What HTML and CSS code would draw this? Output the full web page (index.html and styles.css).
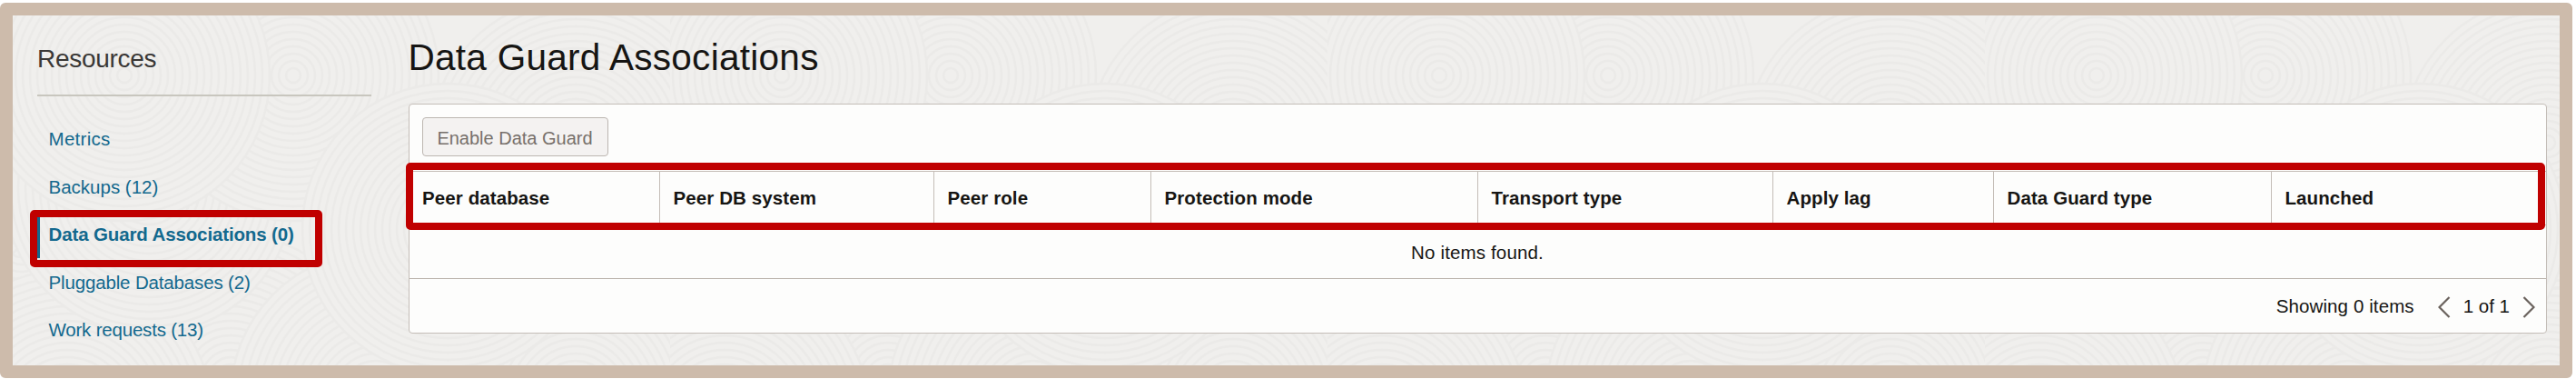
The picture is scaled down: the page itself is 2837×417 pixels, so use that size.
FILE: index.html
```html
<!DOCTYPE html>
<html lang="en">
<head>
<meta charset="utf-8">
<title>Data Guard Associations</title>
<link rel="stylesheet" href="styles.css">
</head>
<body>
<div class="frame">
  <svg class="texture" aria-hidden="true">
    <defs>
      <g id="rings" fill="none" stroke="#ebeae8" stroke-width="2.4">
        <circle r="160" fill="#f0efed"/><circle r="152"/><circle r="144"/><circle r="136"/><circle r="128"/><circle r="120"/><circle r="112"/><circle r="104"/><circle r="96"/><circle r="88"/><circle r="80"/><circle r="72"/><circle r="64"/><circle r="56"/><circle r="48"/><circle r="40"/><circle r="32"/><circle r="24"/><circle r="16"/><circle r="8"/>
      </g>
      <pattern id="grain" width="724" height="480" patternUnits="userSpaceOnUse">
        <rect width="724" height="480" fill="#f0efed"/>
        <use href="#rings" x="10" y="250"/><use href="#rings" x="734" y="250"/>
        <use href="#rings" x="240" y="400"/><use href="#rings" x="400" y="420"/>
        <use href="#rings" x="620" y="420"/><use href="#rings" x="60" y="440"/>
        <use href="#rings" x="620" y="140"/><use href="#rings" x="-104" y="140"/>
        <use href="#rings" x="150" y="190"/>
        <use href="#rings" x="309" y="66"/><use href="#rings" x="123" y="66"/>
        <use href="#rings" x="479" y="235"/>
      </pattern>
    </defs>
    <rect width="100%" height="100%" fill="url(#grain)"/>
  </svg>
  <aside class="sidebar">
    <h2 class="sidebar-title">Resources</h2>
    <nav class="links">
      <a class="link loose">Metrics</a>
      <a class="link">Backups (12)</a>
      <a class="link active">Data Guard Associations (0)</a>
      <a class="link snug">Pluggable Databases (2)</a>
      <a class="link tight">Work requests (13)</a>
    </nav>
  </aside>
  <main class="main">
    <h1 class="title">Data Guard Associations</h1>
    <section class="panel">
      <div class="toolbar"><button class="button" disabled>Enable Data Guard</button></div>
      <div class="head">
        <div class="cell">Peer database</div>
        <div class="cell">Peer DB system</div>
        <div class="cell">Peer role</div>
        <div class="cell">Protection mode</div>
        <div class="cell">Transport type</div>
        <div class="cell">Apply lag</div>
        <div class="cell">Data Guard type</div>
        <div class="cell">Launched</div>
      </div>
      <div class="empty">No items found.</div>
      <div class="footer">
        <span class="count">Showing 0 items</span>
        <svg class="chevron" viewBox="0 0 14 24"><path d="M12.5 1 1.5 12l11 11"/></svg>
        <span class="page">1 of 1</span>
        <svg class="chevron" viewBox="0 0 14 24"><path d="M1.5 1l11 11-11 11"/></svg>
      </div>
    </section>
  </main>
</div>
</body>
</html>
```
FILE: styles.css
```css
*, *::before, *::after { box-sizing: border-box; }
body {
  margin: 0;
  background: #fff;
  overflow: hidden;
  font-family: "Liberation Sans", Arial, sans-serif;
  font-size: 20.5px;
  color: #161513;
}
.frame {
  position: relative;
  display: flex;
  width: 2833px;
  height: 413px;
  margin-top: 3px;
  border: 14px solid #cdbbab;
  border-radius: 6px;
  background: #f0efed;
}
.texture { position: absolute; inset: 0; width: 100%; height: 100%; }
.sidebar {
  position: relative;
  width: 368px;
  margin-left: 27px;
}
.sidebar-title {
  margin: 0;
  height: 89px;
  padding-top: 32px;
  border-bottom: 2px solid #c8c6be;
  font-size: 28px;
  line-height: 32px;
  font-weight: 400;
  letter-spacing: -0.3px;
  color: #3a3836;
}
.links {
  display: flex;
  flex-direction: column;
  padding-top: 21px;
}
.link {
  position: relative;
  height: 52.5px;
  padding-left: 12.5px;
  line-height: 52px;
  color: #13698e;
  white-space: nowrap;
}
.loose { letter-spacing: 0.3px; }
.snug { letter-spacing: -0.15px; }
.tight { letter-spacing: -0.2px; }
.active { font-weight: 700; letter-spacing: -0.13px; }
.active::before {
  content: "";
  position: absolute;
  left: 0;
  top: 5px;
  width: 2.5px;
  height: 47px;
  background: #13698e;
}
.active::after {
  content: "";
  position: absolute;
  left: -8px;
  top: -1px;
  width: 322px;
  height: 63px;
  border: 8px solid #c00000;
  border-radius: 5px;
}
.main {
  position: relative;
  width: 2355px;
  margin-left: 40.5px;
}
.title {
  margin: 0;
  height: 97px;
  padding-top: 23px;
  font-size: 40.5px;
  line-height: 46px;
  font-weight: 400;
  letter-spacing: 0.28px;
}
.panel {
  position: relative;
  height: 253px;
  border: 1.5px solid #c4bdb7;
  border-radius: 4px;
  background: #fdfdfc;
}
.toolbar { height: 73px; padding: 14px 0 0 14px; }
.button {
  display: block;
  width: 205px;
  height: 43px;
  padding: 3px 0 0;
  border: 1px solid #bcb6b1;
  border-radius: 4px;
  background: #f4f2f1;
  font: 400 20px/38px "Liberation Sans", Arial, sans-serif;
  color: #77706b;
}
.head {
  position: relative;
  display: grid;
  grid-template-columns: 276.5px 302px 239px 360px 325px 243px 306px 1fr;
  height: 60px;
  border-top: 1px solid #c4bdb7;
  border-bottom: 1px solid #c4bdb7;
  font-weight: 700;
  letter-spacing: 0.1px;
}
.head::after {
  content: "";
  position: absolute;
  left: -4px;
  top: -10px;
  width: 2356px;
  height: 74px;
  border: 8px solid #c00000;
  border-radius: 5px;
}
.cell {
  padding-left: 14.5px;
  line-height: 57px;
  border-right: 1px solid #c4bdb7;
}
.cell:last-child { border-right: 0; }
.empty {
  height: 59px;
  border-bottom: 1px solid #bab2ab;
  line-height: 60px;
  text-align: center;
  letter-spacing: 0.15px;
}
.footer {
  display: flex;
  align-items: center;
  justify-content: flex-end;
  height: 59px;
  padding-right: 12px;
}
.count { margin-right: 26px; letter-spacing: 0.1px; }
.page { margin: 0 13.5px 0 14px; }
.chevron {
  width: 14px;
  height: 24px;
  margin-top: 3px;
  fill: none;
  stroke: #6a625d;
  stroke-width: 2.2;
}
```
